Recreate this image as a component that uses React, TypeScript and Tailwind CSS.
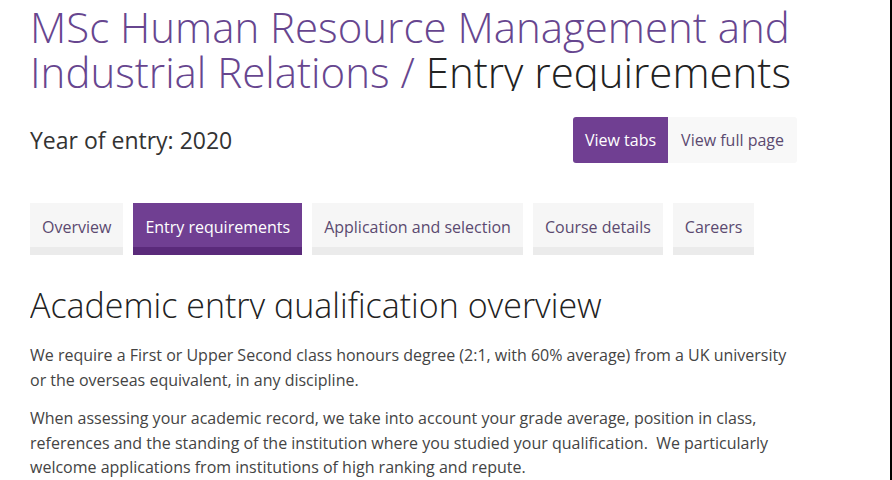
import React from 'react';

const tabs = ['Overview', 'Entry requirements', 'Application and selection', 'Course details', 'Careers'];
const activeTab = 'Entry requirements';

export default function App() {
  return (
    <div className="flex w-[892px] h-[480px] overflow-hidden bg-white" style={{ fontFamily: '"Open Sans", "Noto Sans", sans-serif' }}>
      <main className="flex-1 pl-[30px] pr-[93px]">
        {/* Page title */}
        <div className="h-[91px] overflow-hidden pt-[4px] -mr-[20px]">
          <h1 className="text-[42px] leading-[45px] font-light text-[#67468f]">
            MSc Human Resource Management and<br />
            Industrial Relations / <span className="text-[#222]">Entry requirements</span>
          </h1>
        </div>

        {/* Year + view switch */}
        <div className="flex items-center justify-between mt-[26px] h-[46px]">
          <p className="text-[23px] text-[#333]">Year of entry: 2020</p>
          <div className="flex h-full">
            <button className="px-[12px] bg-[#703f92] text-white text-[16px] rounded-l-[3px]">View tabs</button>
            <button className="px-[13px] bg-[#f8f8f8] text-[#5b4a70] text-[16px] rounded-r-[3px]">View full page</button>
          </div>
        </div>

        {/* Tabs */}
        <nav className="flex gap-[10px] mt-[40px]">
          {tabs.map(t => (
            <div
              key={t}
              className={`h-[52px] px-[12px] flex items-center text-[16px] border-b-[8px] ${
                t === activeTab
                  ? 'bg-[#703f92] border-[#5a2a7a] text-white'
                  : 'bg-[#f6f6f6] border-[#ebebeb] text-[#5b4a70]'
              }`}
            >
              <span className="pt-[4px]">{t}</span>
            </div>
          ))}
        </nav>

        {/* Content */}
        <div className="h-[31px] overflow-hidden mt-[33px]">
          <h2 className="text-[34px] leading-[34px] font-light text-[#222]">Academic entry qualification overview</h2>
        </div>

        <div className="mt-[24px] text-[16px] leading-[24.5px] text-[#444] space-y-[14px]">
          <p>
            We require a First or Upper Second class honours degree (2:1, with 60% average) from a UK university
            or the overseas equivalent, in any discipline.
          </p>
          <p>
            When assessing your academic record, we take into account your grade average, position in class,
            references and the standing of the institution where you studied your qualification.&nbsp; We particularly
            welcome applications from institutions of high ranking and repute.
          </p>
        </div>
      </main>
      <div className="w-[2px] bg-black" />
    </div>
  );
}
